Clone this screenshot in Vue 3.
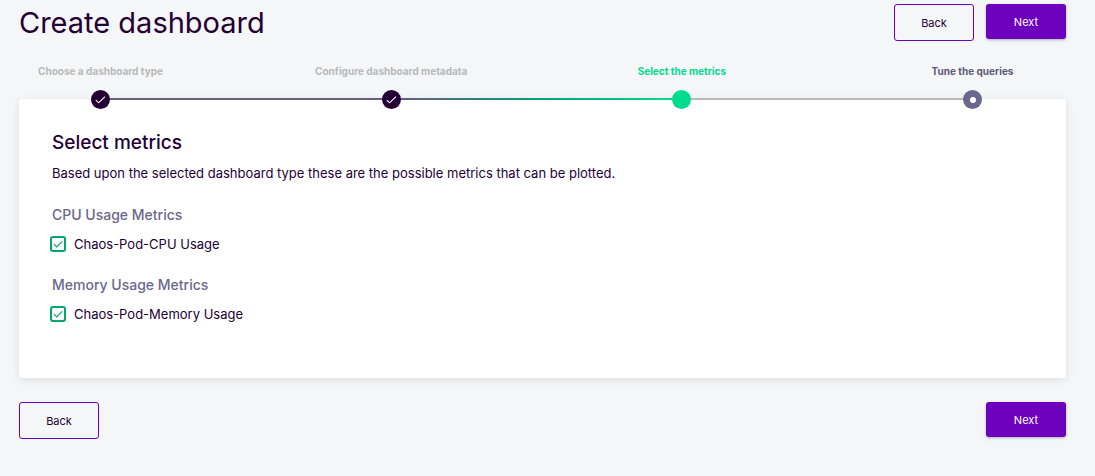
<script setup>
import { reactive } from 'vue'

const steps = [
  { label: 'Choose a dashboard type', state: 'done' },
  { label: 'Configure dashboard metadata', state: 'done' },
  { label: 'Select the metrics', state: 'active' },
  { label: 'Tune the queries', state: 'pending' },
]

const groups = reactive([
  { title: 'CPU Usage Metrics', metric: 'Chaos-Pod-CPU Usage', checked: true },
  { title: 'Memory Usage Metrics', metric: 'Chaos-Pod-Memory Usage', checked: true },
])
</script>

<template>
  <main class="page">
    <header class="top">
      <h1>Create dashboard</h1>
      <div class="actions">
        <button type="button" class="btn outlined">Back</button>
        <button type="button" class="btn filled">Next</button>
      </div>
    </header>

    <ol class="stepper">
      <template v-for="(step, i) in steps" :key="step.label">
        <li v-if="i > 0" class="line" :class="'to-' + step.state" role="presentation"></li>
        <li class="step" :class="step.state">
          <span class="label">{{ step.label }}</span>
          <span class="dot">
            <svg v-if="step.state === 'done'" viewBox="0 0 19 19" aria-hidden="true">
              <path d="M4.8 10.2 L7.6 12.8 L14 6.6" />
            </svg>
          </span>
        </li>
      </template>
    </ol>

    <section class="card">
      <h2>Select metrics</h2>
      <p class="intro">
        Based upon the selected dashboard type these are the possible metrics that can be plotted.
      </p>
      <div v-for="group in groups" :key="group.title" class="group">
        <h3>{{ group.title }}</h3>
        <label class="metric">
          <span class="box">
            <input v-model="group.checked" type="checkbox" />
            <svg v-show="group.checked" viewBox="0 0 16 16" aria-hidden="true">
              <path d="M4 8.2 L6.8 10.9 L12.2 5.3" />
            </svg>
          </span>
          {{ group.metric }}
        </label>
      </div>
    </section>

    <footer class="bottom">
      <button type="button" class="btn outlined">Back</button>
      <button type="button" class="btn filled">Next</button>
    </footer>
  </main>
</template>

<style>
body {
  background: #f4f6f8;
}
</style>

<style scoped>
.page {
  box-sizing: border-box;
  padding: 4px 29px 36px 19px;
  font-family: Inter, "Liberation Sans", sans-serif;
  color: #240035;
}
h1,
h2,
h3,
p,
ol {
  margin: 0;
  padding: 0;
  font-weight: 400;
}
.top {
  display: flex;
  justify-content: space-between;
  align-items: flex-start;
}
h1 {
  font-size: 29px;
  line-height: 38px;
}
.actions {
  display: flex;
  align-items: flex-start;
  gap: 12px;
}
.btn {
  box-sizing: border-box;
  width: 80px;
  padding: 2px 6px 0;
  border-radius: 3px;
  font-family: inherit;
  font-size: 11px;
  line-height: 15px;
  cursor: pointer;
}
.outlined {
  height: 37px;
  border: 1px solid #6c00bc;
  background: transparent;
  color: #240035;
}
.filled {
  height: 35px;
  border: 0;
  background: #6c00bc;
  color: #fff;
  box-shadow: 0 1px 3px rgba(0, 0, 0, 0.3);
}
.stepper {
  position: relative;
  display: flex;
  align-items: flex-end;
  list-style: none;
  padding: 0 84px 0 72px;
  margin-top: 22px;
}
.step {
  display: flex;
  flex-direction: column;
  align-items: center;
  gap: 12px;
  width: 19px;
}
.label {
  font-size: 10px;
  line-height: 14px;
  font-weight: 700;
  white-space: nowrap;
  color: #b9b9b9;
}
.dot {
  display: flex;
  align-items: center;
  justify-content: center;
  width: 19px;
  height: 19px;
  border-radius: 50%;
}
.dot svg {
  width: 19px;
  height: 19px;
}
.dot path,
.box path {
  fill: none;
  stroke: #fff;
  stroke-width: 1.1;
}
.done .dot {
  background: #240035;
}
.active .label {
  color: #00db8f;
}
.active .dot {
  background: #00db8f;
}
.pending .label {
  color: #5f5a78;
}
.pending .dot {
  background: #6c678c;
}
.pending .dot::before {
  content: "";
  width: 6px;
  height: 6px;
  border-radius: 50%;
  background: #fff;
}
.line {
  flex: 1;
  height: 2px;
  margin-bottom: 9px;
  background: #b9b9b9;
}
.to-done {
  background: #64607e;
}
.to-active {
  background: linear-gradient(90deg, #64607e, #009f7b 50%, #00db8f);
}
.card {
  margin-top: -10px;
  padding: 32px 33px 55px;
  border-radius: 3px;
  background: #fff;
  box-shadow: 0 2px 8px rgba(0, 0, 0, 0.1);
}
h2 {
  font-size: 19px;
  line-height: 24px;
  font-weight: 500;
}
.intro {
  margin-top: 9px;
  font-size: 13px;
  line-height: 19px;
}
.group {
  margin-top: 22px;
}
h3 {
  font-size: 14px;
  line-height: 20px;
  font-weight: 500;
  color: #6c678c;
}
.metric {
  display: flex;
  align-items: center;
  gap: 8px;
  width: fit-content;
  margin: 10px 0 0 -2px;
  font-size: 13px;
  line-height: 18px;
  cursor: pointer;
}
.box {
  display: grid;
  width: 16px;
  height: 16px;
}
.box > * {
  grid-area: 1 / 1;
  width: 16px;
  height: 16px;
}
.box input {
  box-sizing: border-box;
  appearance: none;
  margin: 0;
  border: 2px solid #00a86b;
  border-radius: 3px;
  background: #fff;
}
.box svg {
  pointer-events: none;
}
.box path {
  stroke: #00a86b;
}
.bottom {
  display: flex;
  justify-content: space-between;
  align-items: flex-start;
  margin-top: 24px;
}
</style>
